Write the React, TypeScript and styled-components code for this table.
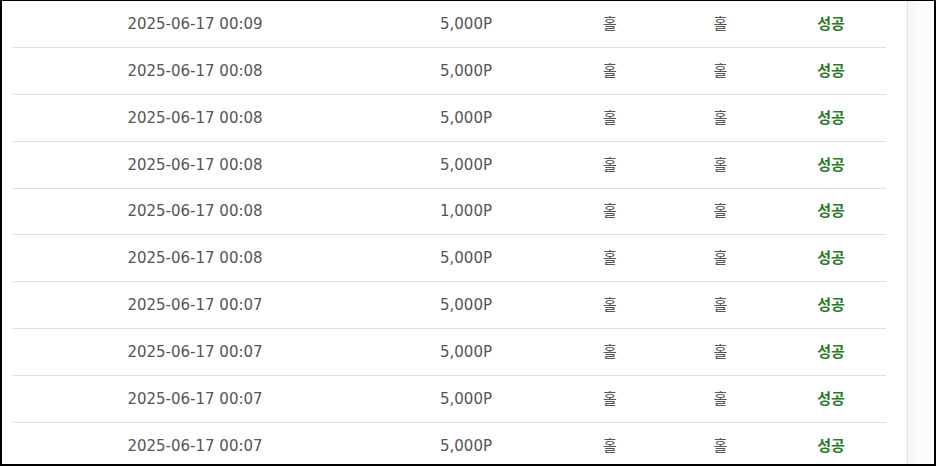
import React from "react";
import styled, { createGlobalStyle } from "styled-components";

const Global = createGlobalStyle`
  html, body { margin: 0; padding: 0; background: #ffffff; }
  body { font-family: "DejaVu Sans", "Noto Sans CJK KR", sans-serif; }
`;

const Frame = styled.div`
  box-sizing: border-box;
  width: 936px;
  height: 466px;
  border-style: solid;
  border-color: #000;
  border-width: 1px 2px 2px 2px;
  overflow: hidden;
  display: flex;
  background: #fff;
`;

const Main = styled.div`
  width: 906px;
  flex: none;
  padding-left: 11px;
  box-sizing: border-box;
  border-right: 1px solid #e2e2e2;
`;

const Side = styled.div`
  flex: 1;
  background: linear-gradient(to right, #f6f6f6, #fbfbfb 40%, #ffffff);
`;

const Table = styled.div`
  width: 873px;
  display: flex;
  flex-direction: column;
`;

const Row = styled.div`
  box-sizing: border-box;
  height: 46.875px;
  flex: none;
  display: grid;
  grid-template-columns: 364px 178px 110px 111px 110px;
  align-items: center;
  border-bottom: 1px solid #e0e0e0;
`;

const Cell = styled.div<{ $status?: boolean }>`
  text-align: center;
  font-size: 15px;
  line-height: 20px;
  font-weight: ${(p) => (p.$status ? 700 : 400)};
  color: ${(p) => (p.$status ? "#2a7a2a" : "#555555")};
  white-space: nowrap;
`;

const rows = [
  ["2025-06-17 00:09", "5,000P"],
  ["2025-06-17 00:08", "5,000P"],
  ["2025-06-17 00:08", "5,000P"],
  ["2025-06-17 00:08", "5,000P"],
  ["2025-06-17 00:08", "1,000P"],
  ["2025-06-17 00:08", "5,000P"],
  ["2025-06-17 00:07", "5,000P"],
  ["2025-06-17 00:07", "5,000P"],
  ["2025-06-17 00:07", "5,000P"],
  ["2025-06-17 00:07", "5,000P"],
];

export default function App() {
  return (
    <>
      <Global />
      <Frame>
        <Main>
          <Table>
            {rows.map(([date, amount], i) => (
              <Row key={i}>
                <Cell>{date}</Cell>
                <Cell>{amount}</Cell>
                <Cell>홀</Cell>
                <Cell>홀</Cell>
                <Cell $status>성공</Cell>
              </Row>
            ))}
          </Table>
        </Main>
        <Side />
      </Frame>
    </>
  );
}
